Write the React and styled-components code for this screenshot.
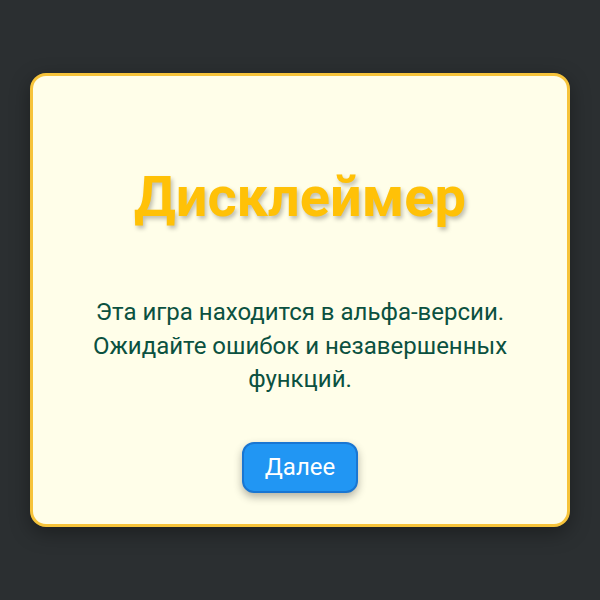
import React from 'react';
import styled, { createGlobalStyle } from 'styled-components';

const GlobalStyle = createGlobalStyle`
  html, body {
    margin: 0;
    padding: 0;
    height: 100%;
  }
  body {
    background-color: #2b2f31;
    font-family: Roboto, "Noto Sans", sans-serif;
  }
  #root {
    height: 100%;
  }
`;

const Screen = styled.div`
  display: flex;
  align-items: center;
  justify-content: center;
  height: 100vh;
  padding: 0 30px;
  box-sizing: border-box;
`;

const Card = styled.div`
  width: 100%;
  box-sizing: border-box;
  background-color: #fffee9;
  border: 3px solid #f6c33a;
  border-radius: 16px;
  box-shadow: 0 6px 20px rgba(0, 0, 0, 0.35);
  padding: 90px 32px 31px;
  display: flex;
  flex-direction: column;
  align-items: center;
  text-align: center;
`;

const Title = styled.h1`
  margin: 0;
  font-size: 56px;
  line-height: 62px;
  font-weight: 700;
  color: #ffc107;
  text-shadow: 2px 3px 4px rgba(0, 0, 0, 0.25);
`;

const Message = styled.p`
  margin: 68px 0 0;
  max-width: 430px;
  font-size: 24px;
  line-height: 33.5px;
  color: #0b5140;
`;

const NextButton = styled.button`
  margin-top: 45px;
  height: 51px;
  padding: 0 21px;
  font-family: inherit;
  font-size: 24px;
  color: #ffffff;
  background-color: #2196f3;
  border: 2px solid #1976d2;
  border-radius: 12px;
  box-shadow: 0 4px 8px rgba(0, 0, 0, 0.3);
  cursor: pointer;
`;

const App = () => {
  return (
    <>
      <GlobalStyle />
      <Screen>
        <Card>
          <Title>Дисклеймер</Title>
          <Message>
            Эта игра находится в альфа-версии. Ожидайте ошибок и незавершенных функций.
          </Message>
          <NextButton>Далее</NextButton>
        </Card>
      </Screen>
    </>
  );
};

export default App;
